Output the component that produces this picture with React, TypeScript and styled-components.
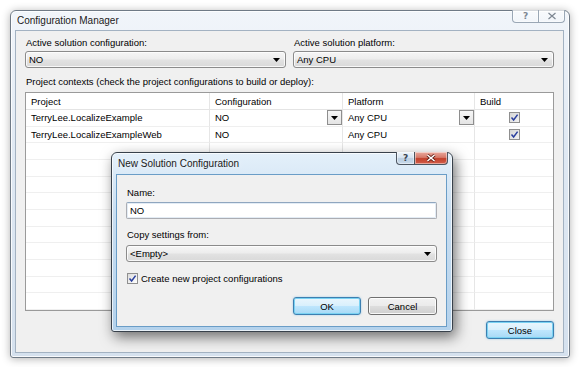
import React from "react";
import styled, { createGlobalStyle } from "styled-components";

const GlobalStyle = createGlobalStyle`
  html, body {
    margin: 0;
    padding: 0;
    background: #fff;
  }
  body {
    width: 580px;
    height: 367px;
    overflow: hidden;
    font-family: "Liberation Sans", Arial, sans-serif;
    font-size: 9.5px;
    color: #000;
  }
`;

type Project = {
  name: string;
  config: string;
  platform: string;
  build: boolean;
  active?: boolean;
};

const projects: Project[] = [
  { name: "TerryLee.LocalizeExample", config: "NO", platform: "Any CPU", build: true, active: true },
  { name: "TerryLee.LocalizeExampleWeb", config: "NO", platform: "Any CPU", build: true },
];

const EMPTY_ROWS = 10;

const Desktop = styled.div`
  position: relative;
  width: 580px;
  height: 367px;
  box-sizing: border-box;
  padding: 10px 10px 0 10px;
`;

const Window = styled.div<{ $active?: boolean }>`
  box-sizing: border-box;
  display: flex;
  flex-direction: column;
  border: 1px solid ${(p) => (p.$active ? "#38414b" : "#6f7a86")};
  border-radius: 6px 6px 3px 3px;
  padding: 0 5px 4px 4px;
  background: ${(p) =>
    p.$active
      ? "linear-gradient(180deg, #e4f0fa 0%, #c9def1 35%, #b4d2ec 100%)"
      : "linear-gradient(180deg, #f1f5fa 0%, #e0e9f3 40%, #d5e1ee 100%)"};
  box-shadow: ${(p) =>
    p.$active
      ? "3px 5px 14px rgba(0,0,0,0.55), inset 0 0 0 1px rgba(255,255,255,0.7)"
      : "0 1px 9px rgba(0,0,0,0.3), inset 0 0 0 1px rgba(255,255,255,0.8)"};
`;

const MainWindow = styled(Window)`
  width: 560px;
  height: 348px;
`;

const Dialog = styled(Window)`
  position: absolute;
  left: 111px;
  top: 152px;
  width: 342px;
  height: 180px;
`;

const TitleBar = styled.div<{ $h: number }>`
  height: ${(p) => p.$h}px;
  flex: none;
  display: flex;
  justify-content: space-between;
  align-items: flex-start;
`;

const Title = styled.span`
  align-self: center;
  padding-left: 2px;
  font-size: 10px;
  color: #1a1a1a;
  text-shadow: 0 0 6px rgba(255, 255, 255, 0.9);
`;

const CaptionGroup = styled.div`
  display: flex;
  margin-top: -1px;
  margin-right: -1px;
`;

const CaptionButton = styled.div<{ $w: number; $kind: "help" | "close"; $active?: boolean }>`
  width: ${(p) => p.$w}px;
  height: 13px;
  box-sizing: border-box;
  display: flex;
  align-items: center;
  justify-content: center;
  border: 1px solid ${(p) => (p.$active ? "#4c5560" : "#9aa7b5")};
  border-top: none;
  border-left-width: ${(p) => (p.$kind === "close" ? 0 : 1)}px;
  border-radius: ${(p) => (p.$kind === "help" ? "0 0 0 4px" : "0 0 4px 0")};
  color: ${(p) => (p.$active ? "#fff" : "#5c6670")};
  font-size: 10px;
  line-height: 1;
  background: ${(p) =>
    !p.$active
      ? "linear-gradient(180deg, rgba(255,255,255,0.5), rgba(255,255,255,0.15))"
      : p.$kind === "close"
      ? "linear-gradient(180deg, #e9a99d 0%, #d77a6a 45%, #c2412c 55%, #d35f4b 100%)"
      : "linear-gradient(180deg, #eef4fa 0%, #d8e5f1 45%, #bccfe2 55%, #c7d9ea 100%)"};
  box-shadow: inset 0 0 0 1px rgba(255, 255, 255, 0.45);
`;

const HelpGlyph = styled.span<{ $active?: boolean }>`
  font-family: "DejaVu Sans", sans-serif;
  font-size: 9px;
  font-weight: bold;
  color: ${(p) => (p.$active ? "#3b4652" : "#7d8792")};
`;

const Client = styled.div<{ $active?: boolean }>`
  flex: 1;
  box-sizing: border-box;
  background: #f0f0f0;
  border: 1px solid ${(p) => (p.$active ? "#6a9dc7" : "#a3b2c2")};
  display: flex;
  flex-direction: column;
`;

const MainBody = styled(Client)`
  padding: 6px 9px 0 9px;
`;

const DialogBody = styled(Client)`
  padding: 12px 9px 0 9px;
`;

const Label = styled.div<{ $mt?: number }>`
  height: 12px;
  line-height: 12px;
  margin-top: ${(p) => p.$mt ?? 0}px;
  padding-left: 1px;
  white-space: nowrap;
`;

const TopRow = styled.div`
  display: grid;
  grid-template-columns: 1fr 1fr;
  column-gap: 7px;
`;

const Field = styled.div`
  display: flex;
  flex-direction: column;
  gap: 2px;
`;

const Combo = styled.div<{ $mt?: number }>`
  height: 17px;
  margin-top: ${(p) => p.$mt ?? 0}px;
  box-sizing: border-box;
  display: flex;
  align-items: center;
  justify-content: space-between;
  padding: 0 5px 0 3px;
  border: 1px solid #8b8b8b;
  border-radius: 3px;
  background: linear-gradient(180deg, #f6f6f6 0%, #ededed 48%, #e2e2e2 52%, #d9d9d9 100%);
  box-shadow: inset 0 0 0 1px rgba(255, 255, 255, 0.8);
`;

const Arrow = () => (
  <svg width="7" height="4" viewBox="0 0 7 4">
    <polygon points="0,0 7,0 3.5,4" fill="#000" />
  </svg>
);

const TextBox = styled.div`
  height: 17px;
  margin-top: 3px;
  box-sizing: border-box;
  display: flex;
  align-items: center;
  padding-left: 3px;
  background: #fff;
  border: 1px solid #abadb3;
  border-top-color: #8fa6bf;
  border-radius: 2px;
  box-shadow: inset 0 0 0 1px #e3ecf5;
`;

const Table = styled.div`
  margin-top: 4px;
  height: 219px;
  box-sizing: border-box;
  border: 1px solid #9a9a9a;
  background: #fff;
  display: grid;
  grid-template-columns: 184px 133px 132px 1fr;
  grid-template-rows: 17px;
  grid-auto-rows: 16.67px;
  overflow: hidden;
`;

const Cell = styled.div<{ $last?: boolean; $center?: boolean }>`
  box-sizing: border-box;
  display: flex;
  align-items: center;
  justify-content: ${(p) => (p.$center ? "center" : "space-between")};
  padding-left: ${(p) => (p.$center ? 0 : 5)}px;
  border-right: ${(p) => (p.$last ? "none" : "1px solid #e6e6e6")};
  border-bottom: 1px solid #efefef;
  white-space: nowrap;
  overflow: hidden;
`;

const HeadCell = styled(Cell)`
  border-bottom: 1px solid #e4e4e4;
  justify-content: flex-start;
`;

const DropButton = styled.div`
  width: 15px;
  height: 15px;
  box-sizing: border-box;
  display: flex;
  align-items: center;
  justify-content: center;
  border: 1px solid #8e8e8e;
  background: linear-gradient(180deg, #f7f7f7 0%, #e4e4e4 100%);
`;

const Check = styled.div<{ $dim?: boolean }>`
  width: 11px;
  height: 11px;
  flex: none;
  box-sizing: border-box;
  display: flex;
  align-items: center;
  justify-content: center;
  border: 1px solid #8f8f8f;
  background: ${(p) =>
    p.$dim
      ? "linear-gradient(135deg, #d6d6d6 0%, #f2f2f2 100%)"
      : "linear-gradient(135deg, #dcdcdc 0%, #ffffff 100%)"};
`;

const CheckMark = () => (
  <svg width="9" height="9" viewBox="0 0 9 9">
    <path d="M1.5 4.6 L3.6 7 L7.6 1.6" fill="none" stroke="#2a3f9e" strokeWidth="1.5" />
  </svg>
);

const CheckRow = styled.div`
  display: flex;
  align-items: center;
  gap: 3px;
  margin-top: 10px;
  padding-left: 1px;
  height: 12px;
`;

const ButtonRow = styled.div<{ $mt: number }>`
  display: flex;
  justify-content: flex-end;
  gap: 7px;
  margin-top: ${(p) => p.$mt}px;
`;

const Button = styled.div<{ $default?: boolean; $w: number }>`
  width: ${(p) => p.$w}px;
  height: 18px;
  box-sizing: border-box;
  display: flex;
  align-items: center;
  justify-content: center;
  border-radius: 3px;
  border: 1px solid ${(p) => (p.$default ? "#3c7fb1" : "#707070")};
  background: ${(p) =>
    p.$default
      ? "linear-gradient(180deg, #eaf6fd 0%, #d9f0fc 48%, #bee6fd 52%, #a7d9f5 100%)"
      : "linear-gradient(180deg, #f2f2f2 0%, #ebebeb 48%, #dddddd 52%, #cfcfcf 100%)"};
  box-shadow: ${(p) =>
    p.$default
      ? "inset 0 0 0 1px #7ad2f2, 0 0 2px rgba(60,160,220,0.5)"
      : "inset 0 0 0 1px rgba(255,255,255,0.85)"};
`;

const CloseX = ({ active }: { active?: boolean }) => (
  <svg width="10" height="8" viewBox="0 0 10 8">
    {active && <path d="M1.5 1 L8.5 7 M8.5 1 L1.5 7" stroke="#5a1a12" strokeWidth="3" />}
    <path
      d="M1.5 1 L8.5 7 M8.5 1 L1.5 7"
      stroke={active ? "#fff" : "#7d8792"}
      strokeWidth={active ? 1.6 : 1.2}
    />
  </svg>
);

const Captions = ({ active, helpW, closeW }: { active?: boolean; helpW: number; closeW: number }) => (
  <CaptionGroup>
    <CaptionButton $w={helpW} $kind="help" $active={active}>
      <HelpGlyph $active={active}>?</HelpGlyph>
    </CaptionButton>
    <CaptionButton $w={closeW} $kind="close" $active={active}>
      <CloseX active={active} />
    </CaptionButton>
  </CaptionGroup>
);

export default function App() {
  return (
    <>
      <GlobalStyle />
      <Desktop>
        <MainWindow>
          <TitleBar $h={19}>
            <Title>Configuration Manager</Title>
            <Captions helpW={27} closeW={26} />
          </TitleBar>
          <MainBody>
            <TopRow>
              <Field>
                <Label>Active solution configuration:</Label>
                <Combo>
                  NO
                  <Arrow />
                </Combo>
              </Field>
              <Field>
                <Label>Active solution platform:</Label>
                <Combo>
                  Any CPU
                  <Arrow />
                </Combo>
              </Field>
            </TopRow>
            <Label $mt={8}>Project contexts (check the project configurations to build or deploy):</Label>
            <Table>
              <HeadCell>Project</HeadCell>
              <HeadCell>Configuration</HeadCell>
              <HeadCell>Platform</HeadCell>
              <HeadCell $last>Build</HeadCell>
              {projects.map((p) => (
                <React.Fragment key={p.name}>
                  <Cell>{p.name}</Cell>
                  <Cell>
                    {p.config}
                    {p.active && (
                      <DropButton>
                        <Arrow />
                      </DropButton>
                    )}
                  </Cell>
                  <Cell>
                    {p.platform}
                    {p.active && (
                      <DropButton>
                        <Arrow />
                      </DropButton>
                    )}
                  </Cell>
                  <Cell $last $center>
                    <Check $dim>{p.build && <CheckMark />}</Check>
                  </Cell>
                </React.Fragment>
              ))}
              {Array.from({ length: EMPTY_ROWS }).map((_, i) => (
                <React.Fragment key={i}>
                  <Cell />
                  <Cell />
                  <Cell />
                  <Cell $last />
                </React.Fragment>
              ))}
            </Table>
            <ButtonRow $mt={10}>
              <Button $default $w={68}>Close</Button>
            </ButtonRow>
          </MainBody>
        </MainWindow>

        <Dialog $active>
          <TitleBar $h={21}>
            <Title>New Solution Configuration</Title>
            <Captions active helpW={19} closeW={33} />
          </TitleBar>
          <DialogBody $active>
            <Label>Name:</Label>
            <TextBox>NO</TextBox>
            <Label $mt={10}>Copy settings from:</Label>
            <Combo $mt={4}>
              &lt;Empty&gt;
              <Arrow />
            </Combo>
            <CheckRow>
              <Check>
                <CheckMark />
              </Check>
              Create new project configurations
            </CheckRow>
            <ButtonRow $mt={13}>
              <Button $default $w={68}>OK</Button>
              <Button $w={69}>Cancel</Button>
            </ButtonRow>
          </DialogBody>
        </Dialog>
      </Desktop>
    </>
  );
}
